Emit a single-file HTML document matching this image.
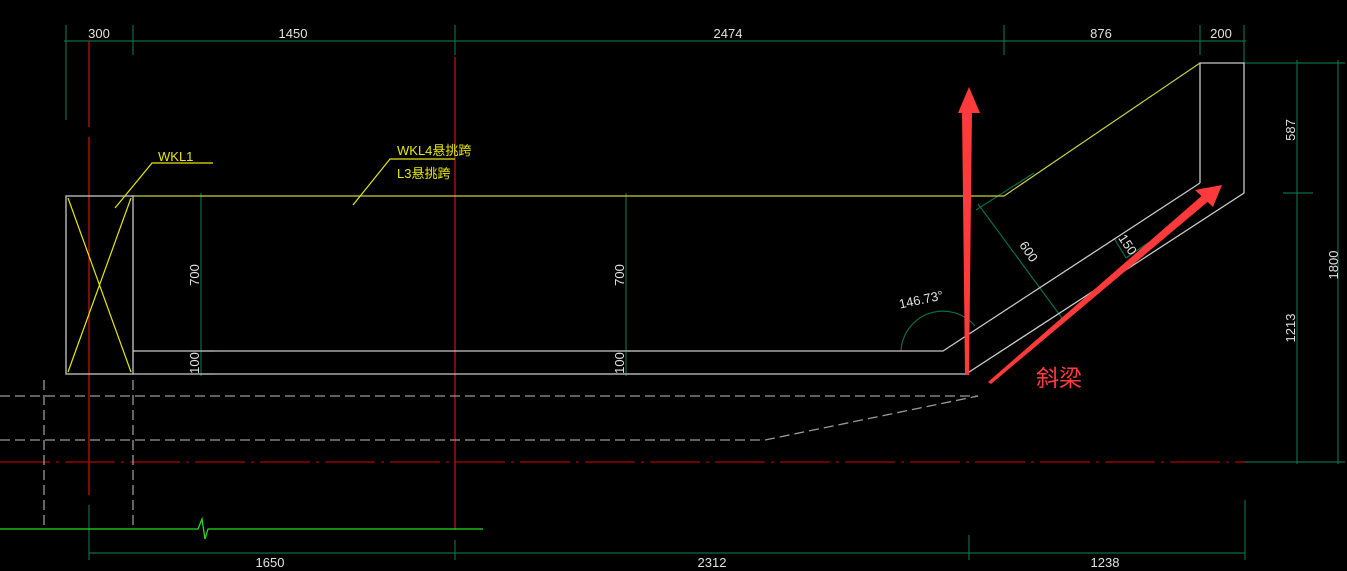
<!DOCTYPE html>
<html><head><meta charset="utf-8"><style>
html,body{margin:0;padding:0;background:#000;width:1347px;height:571px;overflow:hidden}
svg{display:block}
text{font-family:"Liberation Sans","Noto Sans CJK SC",sans-serif}
</style></head><body>
<svg width="1347" height="571" viewBox="0 0 1347 571" xmlns="http://www.w3.org/2000/svg">
<g stroke="#0b6b4a" stroke-width="1.2" fill="none">
<line x1="64" y1="41" x2="1246" y2="41"/>
<line x1="66" y1="25" x2="66" y2="120"/>
<line x1="133" y1="25" x2="133" y2="55"/>
<line x1="455" y1="25" x2="455" y2="55"/>
<line x1="1004" y1="25" x2="1004" y2="55"/>
<line x1="1200" y1="25" x2="1200" y2="55"/>
<line x1="1244" y1="25" x2="1244" y2="63"/>
<line x1="1244" y1="63" x2="1345" y2="63"/>
<line x1="1297" y1="60" x2="1297" y2="464"/>
<line x1="1338" y1="60" x2="1338" y2="464"/>
<line x1="1283" y1="193" x2="1313" y2="193"/>
<line x1="1245" y1="462" x2="1345" y2="462"/>
<line x1="201" y1="193" x2="201" y2="376"/>
<line x1="626" y1="193" x2="626" y2="376"/>
<line x1="190" y1="351" x2="215" y2="351"/><line x1="190" y1="374" x2="215" y2="374"/>
<line x1="612" y1="351" x2="640" y2="351"/><line x1="560" y1="374" x2="640" y2="374"/>
<line x1="89" y1="553" x2="1245" y2="553"/>
<line x1="89" y1="505" x2="89" y2="560"/>
<line x1="455" y1="540" x2="455" y2="560"/>
<line x1="969" y1="535" x2="969" y2="560"/>
<line x1="1245" y1="500" x2="1245" y2="560"/>
<line x1="978" y1="204" x2="1062" y2="318"/>
<line x1="976" y1="210" x2="1034" y2="173"/>
<line x1="1114" y1="238" x2="1126" y2="258"/>
<line x1="1126" y1="258" x2="1148" y2="243"/>
<path d="M901 351 A42 42 0 0 1 975 326"/>
</g>
<g stroke="#d01010" stroke-width="1.2">
<line x1="89" y1="41" x2="89" y2="127"/>
<line x1="89" y1="137" x2="89" y2="495"/>
<line x1="455" y1="57" x2="455" y2="530"/>
<line x1="0" y1="462" x2="1245" y2="462" stroke="#b00000" stroke-dasharray="50 6 3 6"/>
</g>
<g stroke="#c8c8c8" stroke-width="1.3" fill="none">
<rect x="66" y="196" width="67" height="178"/>
<polyline points="1200,183 1200,63 1244,63 1244,193 966,374 133,374"/>
<polyline points="1200,183 943,351 133,351"/>
</g>
<g stroke="#9a9a9a" stroke-width="1.3" fill="none" stroke-dasharray="10 5">
<line x1="0" y1="396" x2="978" y2="396"/>
<polyline points="0,440 765,440 978,396"/>
<line x1="44" y1="380" x2="44" y2="530"/>
<line x1="133" y1="380" x2="133" y2="530"/>
</g>
<polyline points="0,529 198,529 202,519 205,539 208,529 483,529" stroke="#22dd22" stroke-width="1.3" fill="none"/>
<g stroke="#e8e800" stroke-width="1.2" fill="none">
<line x1="68" y1="198" x2="131" y2="372"/>
<line x1="131" y1="198" x2="68" y2="372"/>
<polyline points="133,196 1004,196 1200,63" stroke="#c8d040"/>
<polyline points="213,163 152,163 115,208"/>
<polyline points="455,159 390,159 353,205"/>
</g>
<g fill="#e8e800" font-size="13">
<text x="158" y="161">WKL1</text>
<text x="397" y="155">WKL4悬挑跨</text>
<text x="397" y="178">L3悬挑跨</text>
</g>
<g fill="#e0e0e0" font-size="13" text-anchor="middle">
<text x="99" y="38">300</text>
<text x="293" y="38">1450</text>
<text x="728" y="38">2474</text>
<text x="1101" y="38">876</text>
<text x="1221" y="38">200</text>
<text x="270" y="567">1650</text>
<text x="712" y="567">2312</text>
<text x="1105" y="567">1238</text>
<text transform="translate(1295,130) rotate(-90)">587</text>
<text transform="translate(1295,328) rotate(-90)">1213</text>
<text transform="translate(1338,265) rotate(-90)">1800</text>
<text transform="translate(199,275) rotate(-90)">700</text>
<text transform="translate(624,275) rotate(-90)">700</text>
<text transform="translate(199,363) rotate(-90)">100</text>
<text transform="translate(624,363) rotate(-90)">100</text>
<text transform="translate(1025,254) rotate(56)">600</text>
<text transform="translate(1124,247) rotate(56)">150</text>
<text transform="translate(922,304) rotate(-12)">146.73°</text>
</g>
<g fill="#ff3a3a">
<polygon points="965,375 969,375 972,110 962,110"/>
<polygon points="958,113 980,113 969,87"/>
<polygon points="988,382 991,384 1211,199 1205,193"/>
<polygon points="1195,190 1222,185 1213,207"/>
<text x="1036" y="386" font-size="23" fill="#ff3a3a">斜梁</text>
</g>
</svg>
</body></html>
